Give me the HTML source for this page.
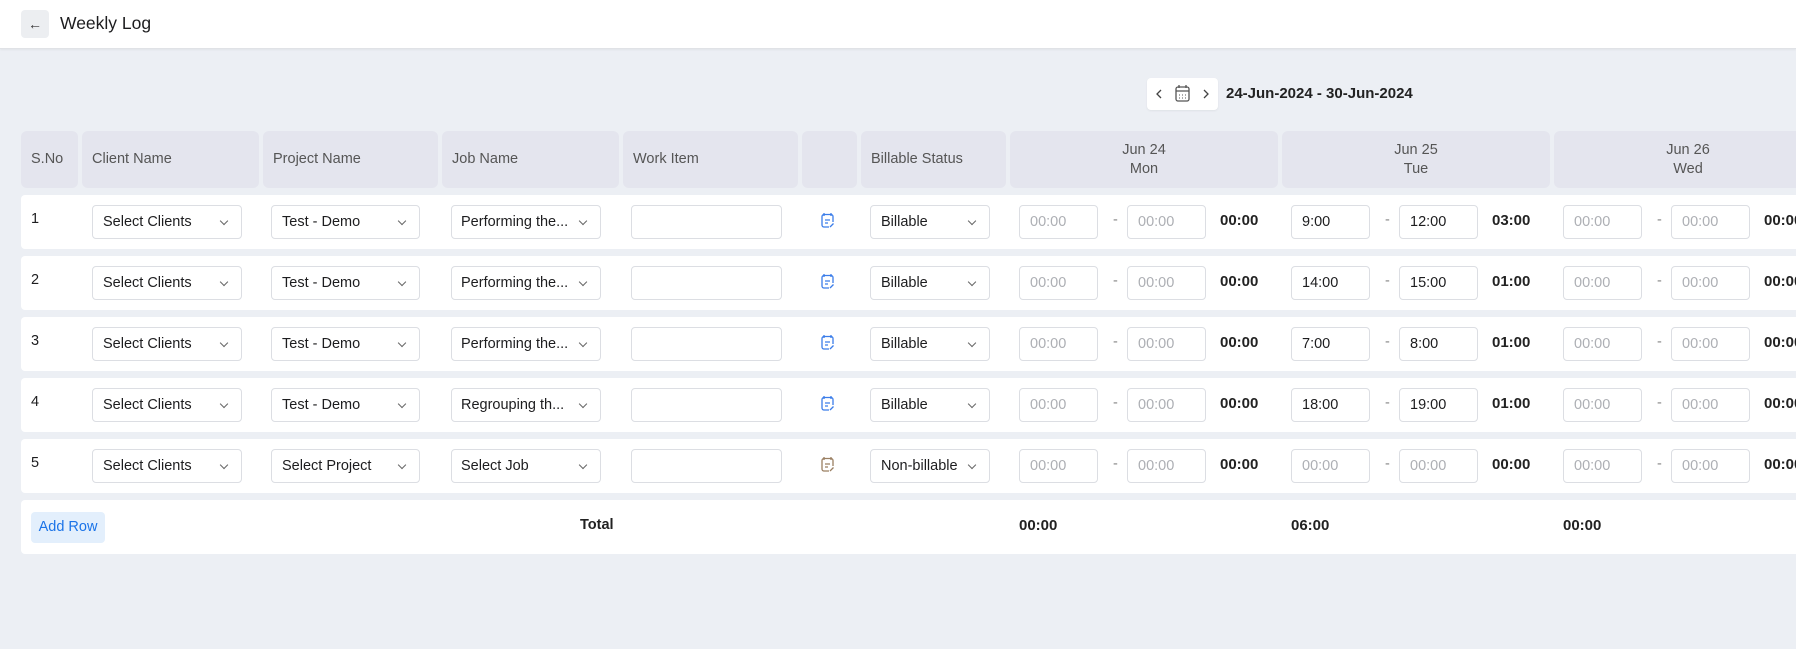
<!DOCTYPE html>
<html><head><meta charset="utf-8"><style>
*{box-sizing:border-box;margin:0;padding:0}
body{width:1796px;height:649px;overflow:hidden;background:#eceff4;font-family:"Liberation Sans",sans-serif;color:#1d1d1f;position:relative}
.top{position:absolute;left:0;top:0;width:1796px;height:49px;background:#fff;border-bottom:1px solid #e0e2e6;box-shadow:0 1px 2px rgba(0,0,0,.05)}
.back{position:absolute;left:21px;top:10px;width:28px;height:28px;background:#eceef1;border-radius:4px;font-size:14px;text-align:center;line-height:28px;color:#333}
.title{position:absolute;left:60px;top:13px;font-size:17.5px;color:#1d1d1f}
.nav{position:absolute;left:1147px;top:78px;width:71px;height:32px;background:#fff;border-radius:4px;box-shadow:0 1px 2px rgba(0,0,0,.06)}
.date{position:absolute;left:1226px;top:85px;font-size:15px;font-weight:bold;color:#222}
.row{position:absolute;left:21px;width:1800px}
.hc{position:absolute;top:0;height:57px;background:#e4e5ee;border-radius:6px;font-size:14.5px;color:#555;padding-left:10px;line-height:57px}
.hc.c{text-align:center;padding:0;line-height:19px;padding-top:10px}
.br{position:absolute;left:21px;width:1800px;height:54px;background:#fff;border-radius:4px;font-size:14.5px}
.el{position:absolute;top:10px;height:34px;border:1px solid #dcdee3;border-radius:4px;background:#fff;padding-left:10px;line-height:32px;white-space:nowrap;overflow:hidden}
.sel:after{content:"";position:absolute;right:14px;top:12px;width:5px;height:5px;border-right:1.2px solid #666;border-bottom:1.2px solid #666;transform:rotate(45deg)}
.ph{color:#adafb4}
.t{position:absolute;top:17px;font-weight:bold;font-size:15px;color:#222}
.dash{position:absolute;top:17px;color:#888}
.no{position:absolute;left:10px;top:16px}
.ic{position:absolute;top:17px}
</style></head><body>
<div class="top"><div class="back">←</div><div class="title">Weekly Log</div></div>
<div class="nav">
<svg width="71" height="32" viewBox="0 0 71 32"><path d="M14 12l-4 4 4 4" fill="none" stroke="#444" stroke-width="1.3"/><rect x="29" y="9" width="13" height="14" rx="2" fill="none" stroke="#555" stroke-width="1.3"/><path d="M29 13h13M32 7v3M39 7v3" stroke="#555" stroke-width="1.3"/><path d="M32 17h1M35 17h1M38 17h1M32 20h1M35 20h1M38 20h1" stroke="#555"/><path d="M57 12l4 4-4 4" fill="none" stroke="#444" stroke-width="1.3"/></svg>
</div>
<div class="date">24-Jun-2024 - 30-Jun-2024</div>
<div class="row" style="top:131px">
<div class="hc" style="left:0;width:57px">S.No</div>
<div class="hc" style="left:61px;width:177px">Client Name</div>
<div class="hc" style="left:242px;width:175px">Project Name</div>
<div class="hc" style="left:421px;width:177px">Job Name</div>
<div class="hc" style="left:602px;width:175px">Work Item</div>
<div class="hc" style="left:781px;width:55px"></div>
<div class="hc" style="left:840px;width:145px">Billable Status</div>
<div class="hc c" style="left:989px;width:268px">Jun 24<br>Mon</div>
<div class="hc c" style="left:1261px;width:268px">Jun 25<br>Tue</div>
<div class="hc c" style="left:1533px;width:268px">Jun 26<br>Wed</div>
</div>
<div id="rows"></div>
<div class="br" style="top:500px">
<div style="position:absolute;left:10px;top:12px;width:74px;height:31px;background:#e3effc;border-radius:4px;color:#1a73e8;font-size:14.5px;text-align:center;line-height:31px">Add Row</div>
<div class="t" style="left:559px;font-size:14.5px">Total</div>
<div class="t" style="left:998px">00:00</div>
<div class="t" style="left:1270px">06:00</div>
<div class="t" style="left:1542px">00:00</div>
</div>
<script>
var d=[["Test - Demo","Performing the...","Billable",["9:00","12:00","03:00"]],
["Test - Demo","Performing the...","Billable",["14:00","15:00","01:00"]],
["Test - Demo","Performing the...","Billable",["7:00","8:00","01:00"]],
["Test - Demo","Regrouping th...","Billable",["18:00","19:00","01:00"]],
["Select Project","Select Job","Non-billable",null]];
var tops=[195,256,317,378,439],h="";
function day(x,v){var a=v?v[0]:"00:00",b=v?v[1]:"00:00",t=v?v[2]:"00:00",c=v?"":" ph";
return '<div class="el'+c+'" style="left:'+(x+9)+'px;width:79px">'+a+'</div><div class="dash" style="left:'+(x+103)+'px">-</div><div class="el'+c+'" style="left:'+(x+117)+'px;width:79px">'+b+'</div><div class="t" style="left:'+(x+210)+'px">'+t+'</div>';}
d.forEach(function(r,i){var col=i<4?"#3b7de9":"#9a7f62";
h+='<div class="br" style="top:'+tops[i]+'px"><div class="no">'+(i+1)+'</div>'+
'<div class="el sel" style="left:71px;width:150px">Select Clients</div>'+
'<div class="el sel" style="left:250px;width:149px">'+r[0]+'</div>'+
'<div class="el sel" style="left:430px;width:150px;padding-left:9px">'+r[1]+'</div>'+
'<div class="el" style="left:610px;width:151px"></div>'+
'<svg class="ic" style="left:799px" width="15" height="17" viewBox="0 0 15 17"><path d="M4 1v3M11 1v3" stroke="'+col+'" stroke-width="1.3"/><path d="M13 10V4.5a2 2 0 0 0-2-2H4a2 2 0 0 0-2 2V13a2 2 0 0 0 2 2h5" fill="none" stroke="'+col+'" stroke-width="1.3"/><path d="M5 8h5M5 11h3M10 15l3.5-3.5" stroke="'+col+'" stroke-width="1.3" fill="none"/></svg>'+
'<div class="el sel" style="left:849px;width:120px;padding-left:10px">'+r[2]+'</div>'+
day(989,null)+day(1261,r[3])+day(1533,null)+'</div>';});
document.getElementById("rows").innerHTML=h;
</script>
</body></html>
